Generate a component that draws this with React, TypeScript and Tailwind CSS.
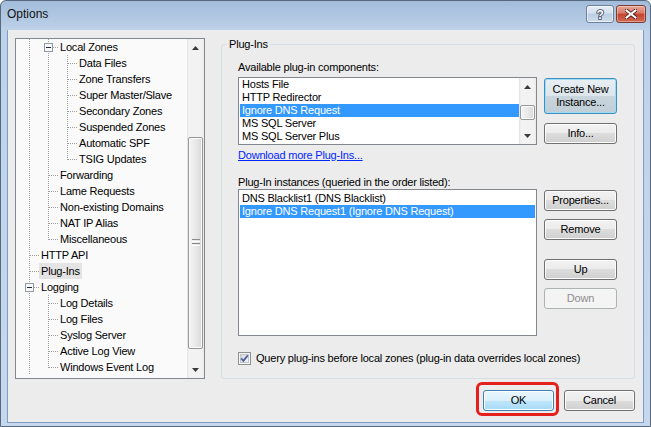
import React from "react";

type TreeRow = {
  label: string;
  rails: boolean[];
  last?: boolean;
  open?: boolean;
  selected?: boolean;
};

const treeRows: TreeRow[] = [
  { label: "Local Zones", rails: [true], open: true },
  { label: "Data Files", rails: [true, true] },
  { label: "Zone Transfers", rails: [true, true] },
  { label: "Super Master/Slave", rails: [true, true] },
  { label: "Secondary Zones", rails: [true, true] },
  { label: "Suspended Zones", rails: [true, true] },
  { label: "Automatic SPF", rails: [true, true] },
  { label: "TSIG Updates", rails: [true, true], last: true },
  { label: "Forwarding", rails: [true] },
  { label: "Lame Requests", rails: [true] },
  { label: "Non-existing Domains", rails: [true] },
  { label: "NAT IP Alias", rails: [true] },
  { label: "Miscellaneous", rails: [true], last: true },
  { label: "HTTP API", rails: [] },
  { label: "Plug-Ins", rails: [], selected: true },
  { label: "Logging", rails: [], open: true },
  { label: "Log Details", rails: [true] },
  { label: "Log Files", rails: [true] },
  { label: "Syslog Server", rails: [true] },
  { label: "Active Log View", rails: [true] },
  { label: "Windows Event Log", rails: [true], last: true },
];

const components = [
  "Hosts File",
  "HTTP Redirector",
  "Ignore DNS Request",
  "MS SQL Server",
  "MS SQL Server Plus",
];

const instances = ["DNS Blacklist1 (DNS Blacklist)", "Ignore DNS Request1 (Ignore DNS Request)"];

const DOT = "#a0a0a0";

function Rail({ on }: { on: boolean }) {
  return (
    <svg width="19" height="16" className="shrink-0">
      {on && <line x1="9.5" y1="0" x2="9.5" y2="16" stroke={DOT} strokeDasharray="1 1" />}
    </svg>
  );
}

function Joint({ last, open }: { last?: boolean; open?: boolean }) {
  return (
    <svg width="19" height="16" className="shrink-0">
      <line x1="9.5" y1="0" x2="9.5" y2={last ? 9 : 16} stroke={DOT} strokeDasharray="1 1" />
      <line x1="10" y1="8.5" x2="19" y2="8.5" stroke={DOT} strokeDasharray="1 1" />
      {open && (
        <>
          <rect x="5.5" y="4.5" width="8" height="8" fill="#f7f7f7" stroke="#8f9aa6" />
          <line x1="7" y1="8.5" x2="12" y2="8.5" stroke="#1e2a3a" />
        </>
      )}
    </svg>
  );
}

function Arrow({ down }: { down?: boolean }) {
  return (
    <svg width="7" height="4">
      <path d={down ? "M0 0 L7 0 L3.5 4 Z" : "M0 4 L3.5 0 L7 4 Z"} fill="#3a3a3a" />
    </svg>
  );
}

function Grip() {
  return (
    <svg width="8" height="8">
      {[0, 2, 4, 6].map((y) => (
        <line key={y} x1="0" y1={y + 0.5} x2="8" y2={y + 0.5} stroke={y % 4 === 0 ? "#8a8a8a" : "#ffffff"} />
      ))}
    </svg>
  );
}

function ScrollBar({ thumb, grip }: { thumb: string; grip?: boolean }) {
  return (
    <div className="flex w-[17px] shrink-0 flex-col bg-[linear-gradient(90deg,#e2e2e2,#f2f2f2_2px,#f2f2f2_15px,#e9e9e9)]">
      <div className="flex h-[17px] shrink-0 items-center justify-center">
        <Arrow />
      </div>
      <div className="flex-1">
        <div
          className={`mx-[1px] flex items-center justify-center rounded-[2px] border border-[#979797] bg-[linear-gradient(90deg,#f4f4f4,#e9e9e9_50%,#d8d8d8)] shadow-[inset_0_0_0_1px_#fbfbfb] ${thumb}`}
        >
          {grip && <Grip />}
        </div>
      </div>
      <div className="flex h-[17px] shrink-0 items-center justify-center">
        <Arrow down />
      </div>
    </div>
  );
}

type Kind = "normal" | "focus" | "hot" | "disabled";

const looks: Record<Kind, string> = {
  normal:
    "border-[#707070] bg-[linear-gradient(#f2f2f2,#ebebeb_50%,#dddddd_50%,#cfcfcf)] shadow-[inset_0_0_0_1px_#fcfcfc] text-black",
  focus:
    "border-[#3c8fc0] bg-[linear-gradient(#e9eff3,#dde6ec_50%,#cad6de_50%,#bfcdd6)] shadow-[inset_0_0_0_1px_#9edcf6] text-black",
  hot:
    "border-[#3c7fb1] bg-[linear-gradient(#eaf6fd,#d9f0fc_50%,#bee6fd_50%,#a7d9f5)] shadow-[inset_0_0_0_1px_#ffffff] text-black",
  disabled: "border-[#adb2b5] bg-[#f4f4f4] text-[#8d8d8d]",
};

function Btn({ kind = "normal", className = "", children }: { kind?: Kind; className?: string; children: React.ReactNode }) {
  return (
    <button
      type="button"
      className={`flex items-center justify-center rounded-[3px] border text-center leading-[13px] ${looks[kind]} ${className}`}
    >
      {children}
    </button>
  );
}

function CheckBox() {
  return (
    <svg width="13" height="13" className="shrink-0">
      <defs>
        <linearGradient id="cbfill" x1="0" y1="0" x2="1" y2="1">
          <stop offset="0" stopColor="#d2d5da" />
          <stop offset="1" stopColor="#f7f7f7" />
        </linearGradient>
      </defs>
      <rect x="0.5" y="0.5" width="12" height="12" fill="#f6f6f6" stroke="#8e8f8f" />
      <rect x="2.5" y="2.5" width="8" height="8" fill="url(#cbfill)" stroke="#c2c5ca" />
      <path d="M3.2 6.4 L5.4 8.9 L9.8 3.4" fill="none" stroke="#4a5f9c" strokeWidth="1.7" />
    </svg>
  );
}

function TitleBar() {
  return (
    <div className="flex h-[29px] shrink-0 items-start">
      <div className="pl-[6px] pt-[6px] text-[12px] leading-[14px] tracking-normal text-[#111]">Options</div>
      <div className="ml-auto mr-[4px] mt-[4px] flex gap-[2px]">
        <div className="flex h-[18px] w-[28px] items-center justify-center rounded-[3px] border border-[#6d8099] bg-[linear-gradient(#e6eef7,#d3dfed_45%,#bccee3_50%,#cfdcec)] shadow-[inset_0_0_0_1px_rgba(255,255,255,0.55)]">
          <svg width="10" height="14">
            <text
              x="5"
              y="11.5"
              textAnchor="middle"
              fontFamily="Liberation Sans, Arial, sans-serif"
              fontWeight="bold"
              fontSize="12"
              fill="#ffffff"
              stroke="#3c4656"
              strokeWidth="1.6"
              paintOrder="stroke"
            >
              ?
            </text>
          </svg>
        </div>
        <div className="flex h-[18px] w-[30px] items-center justify-center rounded-[3px] border border-[#7c3a30] bg-[linear-gradient(#e8a597,#d67a68_45%,#c4432f_50%,#d06a55)] shadow-[inset_0_0_0_1px_rgba(255,255,255,0.35)]">
          <svg width="12" height="10">
            <path d="M1.5 1.5 L10.5 8.5 M10.5 1.5 L1.5 8.5" stroke="#4a1a14" strokeWidth="3.6" strokeLinecap="square" />
            <path d="M1.5 1.5 L10.5 8.5 M10.5 1.5 L1.5 8.5" stroke="#ffffff" strokeWidth="2" strokeLinecap="square" />
          </svg>
        </div>
      </div>
    </div>
  );
}

function Tree() {
  return (
    <div className="flex h-[341px] w-[190px] shrink-0 border border-[#828790] bg-[#fafafa]">
      <div className="flex-1 overflow-hidden pl-[4px]">
        {treeRows.map((r) => (
          <div key={r.label} className="flex h-[16px] items-center whitespace-nowrap">
            {r.rails.map((on, i) => (
              <Rail key={i} on={on} />
            ))}
            <Joint last={r.last} open={r.open} />
            <span className={`h-[16px] px-[2px] leading-[16px] ${r.selected ? "bg-[#e4e4e4]" : ""}`}>{r.label}</span>
          </div>
        ))}
      </div>
      <ScrollBar thumb="mt-[81px] h-[212px]" grip />
    </div>
  );
}

export default function App() {
  return (
    <div className="h-[427px] w-[651px] overflow-hidden font-['Liberation_Sans',Arial,sans-serif] text-[11px] tracking-[-0.2px] text-black">
      <div className="flex h-[427px] w-[651px] flex-col rounded-t-[6px] border border-[#56697f] bg-[linear-gradient(180deg,#a2bcda_0px,#bed2e9_30px,#c5d8ed_427px)]">
        <TitleBar />
        <div className="mx-[6px] flex h-[393px] flex-col border-x border-b border-[#7d9dc4] bg-[#ececec] px-[7px] pt-[8px]">
          <div className="flex gap-[16px]">
            <Tree />
            <fieldset className="h-[341px] w-[414px] rounded-[3px] border border-[#d5dfe5]">
              <legend className="ml-[5px] px-[2px] leading-[13px]">Plug-Ins</legend>
              <div className="flex flex-col pl-[16px] pt-[10px]">
                <div className="leading-[13px]">Available plug-in components:</div>
                <div className="mt-[3px] flex gap-[7px]">
                  <div className="flex h-[68px] w-[299px] border border-[#828790] bg-white">
                    <div className="flex-1 pl-[1px]">
                      {components.map((c) => (
                        <div
                          key={c}
                          className={`h-[13px] px-[2px] leading-[13px] whitespace-nowrap ${c === "Ignore DNS Request" ? "bg-[#3399ff] text-white" : ""}`}
                        >
                          {c}
                        </div>
                      ))}
                    </div>
                    <ScrollBar thumb="mt-[10px] h-[15px]" />
                  </div>
                  <div className="flex w-[73px] flex-col pt-[1px]">
                    <Btn kind="focus" className="h-[36px] w-[73px]">
                      Create New
                      <br />
                      Instance...
                    </Btn>
                    <Btn className="mt-[9px] h-[21px] w-[73px]">Info...</Btn>
                  </div>
                </div>
                <div className="mt-[4px] leading-[13px]">
                  <span className="text-[#0026ff] underline">Download more Plug-Ins...</span>
                </div>
                <div className="mt-[14px] leading-[13px]">Plug-In instances (queried in the order listed):</div>
                <div className="flex gap-[7px]">
                  <div className="h-[147px] w-[299px] border border-[#828790] bg-white px-[1px] pt-[2px]">
                    {instances.map((c, i) => (
                      <div
                        key={c}
                        className={`h-[13px] px-[2px] leading-[13px] whitespace-nowrap ${i === 1 ? "bg-[#3399ff] text-white" : ""}`}
                      >
                        {c}
                      </div>
                    ))}
                  </div>
                  <div className="flex w-[73px] flex-col pt-[1px]">
                    <Btn className="h-[21px] w-[73px]">Properties...</Btn>
                    <Btn className="mt-[8px] h-[21px] w-[73px]">Remove</Btn>
                    <Btn className="mt-[19px] h-[21px] w-[73px]">Up</Btn>
                    <Btn kind="disabled" className="mt-[8px] h-[21px] w-[73px]">
                      Down
                    </Btn>
                  </div>
                </div>
                <div className="mt-[16px] flex items-center gap-[5px]">
                  <CheckBox />
                  <span className="leading-[13px]">Query plug-ins before local zones (plug-in data overrides local zones)</span>
                </div>
              </div>
            </fieldset>
          </div>
          <div className="mt-[11px] flex justify-end gap-[10px] pr-[1px]">
            <div className="relative">
              <Btn kind="hot" className="h-[21px] w-[71px]">
                OK
              </Btn>
              <span className="pointer-events-none absolute -top-[8px] -right-[5px] -bottom-[5px] -left-[7px] rounded-[6px] border-[3px] border-[#e5201c]" />
            </div>
            <Btn className="h-[21px] w-[71px]">Cancel</Btn>
          </div>
        </div>
      </div>
    </div>
  );
}
